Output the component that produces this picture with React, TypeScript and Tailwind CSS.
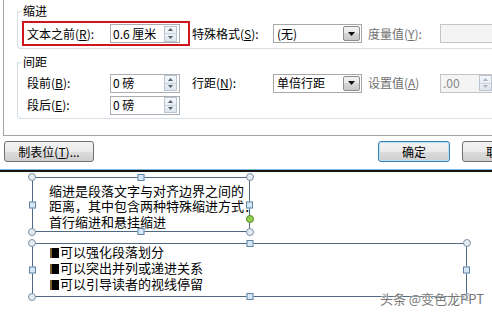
import React from 'react';

const CJK = "font-['Noto_Sans_CJK_SC','Noto_Sans',sans-serif]";

const Arrow: React.FC<{ up?: boolean; color?: string }> = ({ up, color = '#4e5f70' }) => (
  <svg width="5" height="3" viewBox="0 0 5 3">
    <path d={up ? 'M0 3 L2.5 0 L5 3Z' : 'M0 0 L2.5 3 L5 0Z'} fill={color} />
  </svg>
);

const Spinner: React.FC<{ faded?: boolean }> = ({ faded }) => (
  <div className="flex h-[16px] w-[13px] shrink-0 flex-col border border-[#b9c5d1] bg-linear-to-b from-[#f5f8fb] to-[#dfe6ed]">
    <div className="flex flex-1 items-center justify-center border-b border-[#cbd4dd]">
      <Arrow up color={faded ? '#a9b3bd' : '#4e5f70'} />
    </div>
    <div className="flex flex-1 items-center justify-center">
      <Arrow color={faded ? '#a9b3bd' : '#4e5f70'} />
    </div>
  </div>
);

const NumBox: React.FC<{ value: string }> = ({ value }) => (
  <div className="flex h-[19px] w-[70px] shrink-0 items-center border border-[#abadb3] bg-white pl-[2px] pr-[2px]">
    <span className="flex-1 whitespace-pre">{value}</span>
    <Spinner />
  </div>
);

const Combo: React.FC<{ value: string }> = ({ value }) => (
  <div className="flex h-[19px] w-[89px] shrink-0 items-center border border-[#a8a8a8] bg-white pl-[3px] pr-px">
    <span className="flex-1">{value}</span>
    <div className="flex h-[15px] w-[17px] items-center justify-center rounded-[2px] border border-[#8e8e8e] bg-[linear-gradient(#f4f4f4,#e6e6e6_50%,#d6d6d6_50%,#c8c8c8)]">
      <svg width="7" height="4" viewBox="0 0 7 4">
        <path d="M0 0 L7 0 L3.5 4Z" fill="#111" />
      </svg>
    </div>
  </div>
);

const Group: React.FC<{ title: string; className: string; children: React.ReactNode }> = ({ title, className, children }) => (
  <div className={`relative flex flex-col border-b border-l border-[#d5dfe5] rounded-bl-[4px] ${className}`}>
    <span className="absolute -left-px top-0 h-[5px] w-[5px] rounded-tl-[4px] border-l border-t border-[#d5dfe5] bg-white" />
    <div className="relative -mt-[7px] ml-[4px] h-[14px] self-start bg-white px-px">{title}</div>
    {children}
  </div>
);

const Handle: React.FC<{ kind: 'c' | 's' | 'g'; pos: string }> = ({ kind, pos }) => {
  if (kind === 's')
    return <span className={`absolute h-[7px] w-[7px] border border-[#5f84a6] bg-[#d7e8f5] ${pos}`} />;
  if (kind === 'g')
    return <span className={`absolute h-[8px] w-[8px] rounded-full border border-[#5c8a35] bg-[#8fd14f] ${pos}`} />;
  return <span className={`absolute h-[8px] w-[8px] rounded-full border border-[#7d92a8] bg-[#e3ebf1] ${pos}`} />;
};

const Bullet: React.FC = () => (
  <span className="mr-px inline-block h-[10px] w-[9px] border-l-2 border-[#7d5a2c] bg-black align-[-1px]" />
);

export default function App() {
  return (
    <div className={`relative flex h-[315px] w-[492px] flex-col overflow-hidden bg-white text-[12px] leading-[14px] text-black ${CJK}`}>
      {/* 段落对话框 */}
      <div className="ml-[3px] h-[136px] shrink-0 border-b border-l border-[#a5a5a5] pl-[13px] pt-[11px]">
        <Group title="缩进" className="h-[38px]">
          <div className="mt-[3px] flex items-center">
            <div className="ml-[4px] flex h-[25px] w-[168px] shrink-0 items-center border-2 border-[#d0141c]">
              <span className="w-[86px] shrink-0 pl-[3px]">
                文本之前(<u>R</u>):
              </span>
              <NumBox value="0.6 厘米" />
            </div>
            <span className="ml-[2px] w-[81px] shrink-0">
              特殊格式(<u>S</u>):
            </span>
            <Combo value="(无)" />
            <span className="ml-[6px] w-[72px] shrink-0 text-[#6f6f6f]">
              度量值(<u>Y</u>):
            </span>
            <div className="h-[19px] w-[60px] shrink-0 border border-[#c4c4c4] bg-[#f4f4f4]" />
          </div>
        </Group>

        <Group title="间距" className="mt-[13px] h-[57px]">
          <div className="mt-[5px] flex h-[18px] items-center">
            <span className="w-[92px] shrink-0 pl-[9px]">
              段前(<u>B</u>):
            </span>
            <NumBox value="0 磅" />
            <span className="ml-[12px] w-[81px] shrink-0">
              行距(<u>N</u>):
            </span>
            <Combo value="单倍行距" />
            <span className="ml-[6px] w-[72px] shrink-0 text-[#6f6f6f]">
              设置值(<u>A</u>)
            </span>
            <div className="flex h-[19px] w-[55px] shrink-0 items-center border border-[#c4c4c4] bg-[#f4f4f4] pl-[2px] pr-[2px] text-[#8a8a8a]">
              <span className="flex-1">.00</span>
              <Spinner faded />
            </div>
          </div>
          <div className="mt-[4px] flex h-[18px] items-center">
            <span className="w-[92px] shrink-0 pl-[9px]">
              段后(<u>E</u>):
            </span>
            <NumBox value="0 磅" />
          </div>
        </Group>
      </div>

      <div className="mt-[5px] flex h-[21px] shrink-0 items-center">
        <button className="ml-[4px] flex h-[21px] w-[90px] shrink-0 items-center justify-center rounded-[3px] border border-[#707070] bg-[linear-gradient(#f2f2f2,#ebebeb_50%,#dddddd_50%,#cfcfcf)]">
          制表位(<u>T</u>)...
        </button>
        <button className="ml-[284px] flex h-[21px] w-[72px] shrink-0 items-center justify-center rounded-[3px] border border-[#3c7fb1] bg-[linear-gradient(#f2f2f2,#ebebeb_50%,#dddddd_50%,#cfcfcf)] shadow-[inset_0_0_0_1px_#b8e2f8]">
          确定
        </button>
        <button className="ml-[12px] flex h-[21px] w-[72px] shrink-0 items-center justify-center rounded-[3px] border border-[#707070] bg-[linear-gradient(#f2f2f2,#ebebeb_50%,#dddddd_50%,#cfcfcf)]">
          取消
        </button>
      </div>

      <div className="mt-[7px] h-px shrink-0 bg-[#7cb8e0]" />
      <div className="h-[2px] shrink-0 bg-[#151515]" />

      {/* 幻灯片画布 */}
      <div className="relative flex-1 bg-white text-[13px] text-black">
        <div className="absolute left-[32px] top-[5px] h-[55px] w-[218px] border border-[#4f6983]">
          <div className="whitespace-nowrap pl-[16px] pt-[5px] leading-[15.3px]">
            <div>缩进是段落文字与对齐边界之间的</div>
            <div>距离，其中包含两种特殊缩进方式：</div>
            <div>首行缩进和悬挂缩进</div>
          </div>
          <Handle kind="c" pos="-left-[5px] -top-[5px]" />
          <Handle kind="s" pos="left-1/2 -translate-x-1/2 -top-[4px]" />
          <Handle kind="c" pos="-right-[5px] -top-[5px]" />
          <Handle kind="s" pos="-left-[4px] top-1/2 -translate-y-1/2" />
          <Handle kind="s" pos="-right-[4px] top-1/2 -translate-y-1/2" />
          <Handle kind="g" pos="-right-[5px] top-[37px]" />
          <Handle kind="c" pos="-left-[5px] -bottom-[5px]" />
          <Handle kind="s" pos="left-1/2 -translate-x-1/2 -bottom-[4px]" />
          <Handle kind="c" pos="-right-[5px] -bottom-[5px]" />
        </div>

        <div className="absolute left-[32px] top-[71px] h-[54px] w-[435px] border border-[#4f6983]">
          <div className="whitespace-nowrap pl-[17px] leading-[16px]">
            <div>
              <Bullet />
              可以强化段落划分
            </div>
            <div>
              <Bullet />
              可以突出并列或递进关系
            </div>
            <div>
              <Bullet />
              可以引导读者的视线停留
            </div>
          </div>
          <Handle kind="c" pos="-left-[5px] -top-[5px]" />
          <Handle kind="s" pos="left-1/2 -translate-x-1/2 -top-[4px]" />
          <Handle kind="c" pos="-right-[5px] -top-[5px]" />
          <Handle kind="s" pos="-left-[4px] top-1/2 -translate-y-1/2" />
          <Handle kind="s" pos="-right-[4px] top-1/2 -translate-y-1/2" />
          <Handle kind="c" pos="-left-[5px] -bottom-[5px]" />
          <Handle kind="s" pos="left-1/2 -translate-x-1/2 -bottom-[4px]" />
          <Handle kind="c" pos="-right-[5px] -bottom-[5px]" />
        </div>

        <div className="absolute right-[8px] top-[119px] whitespace-nowrap text-[13px] leading-[15px] text-[#777] [text-shadow:0_0_2px_#fff,0_0_1px_#fff]">
          头条 @变色龙PPT
        </div>
      </div>
    </div>
  );
}
